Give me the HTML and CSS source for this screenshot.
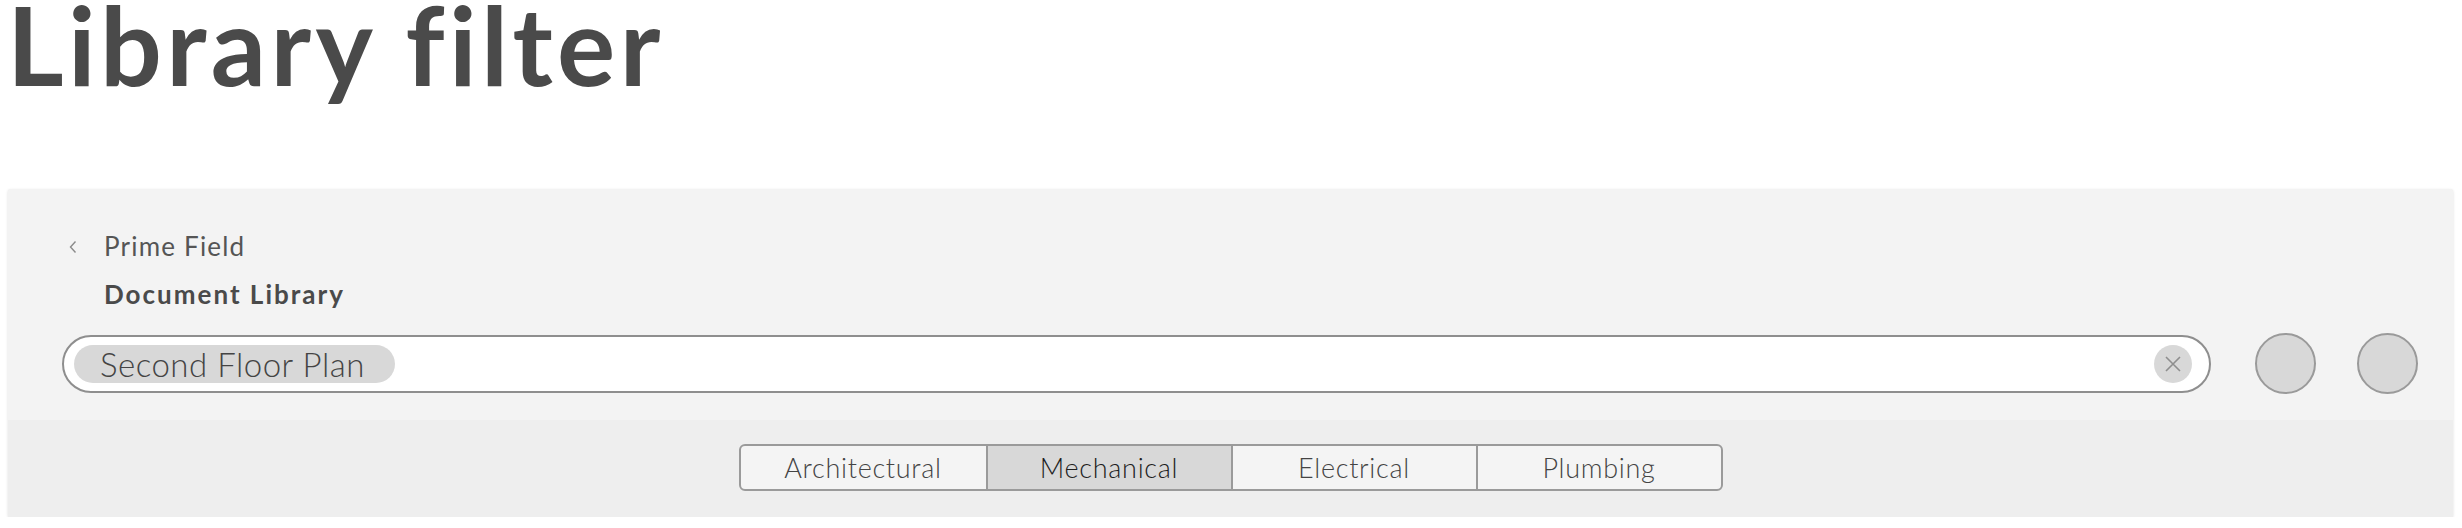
FILE: index.html
```html
<!DOCTYPE html>
<html>
<head>
<meta charset="utf-8">
<link rel="stylesheet" href="styles.css">
</head>
<body>
<h1 class="title">Library filter</h1>
<div class="panel">
  <div class="top">
    <div class="crumb">
      <span class="chev"><svg width="10" height="14" viewBox="0 0 10 14"><path d="M7.5 1.5 L2.5 7 L7.5 12.5" fill="none" stroke="#8a8a8a" stroke-width="1.4"/></svg></span>
      <span class="crumb-text">Prime Field</span>
    </div>
    <div class="heading">Document Library</div>
    <div class="search-row">
      <div class="search">
        <span class="chip">Second Floor Plan</span>
        <span class="spacer"></span>
        <span class="clear"><svg width="20" height="20" viewBox="0 0 20 20"><path d="M3 3 L17 17 M17 3 L3 17" stroke="#8e8e8e" stroke-width="1.6" fill="none"/></svg></span>
      </div>
      <span class="circle"></span>
      <span class="circle"></span>
    </div>
  </div>
  <div class="bar">
    <div class="seg">
      <span class="seg-item">Architectural</span>
      <span class="seg-item active">Mechanical</span>
      <span class="seg-item">Electrical</span>
      <span class="seg-item">Plumbing</span>
    </div>
  </div>
</div>
</body>
</html>
```

FILE: styles.css
```css
* { box-sizing: border-box; }
html, body { margin: 0; padding: 0; background: #fff; }
body { font-family: Lato, "Noto Sans", sans-serif; color: #4a4a4a; }

.title {
  margin: 0;
  padding-left: 7px;
  font-size: 109px;
  line-height: 87px;
  font-weight: 700;
  letter-spacing: 4.4px;
  color: #4a4a4a;
  white-space: nowrap;
}

.panel {
  margin: 102px 9px 0 8px;
  background: #f3f3f3;
  box-shadow: 0 1px 3px rgba(0,0,0,0.14);
  border-radius: 2px;
}

.top {
  padding: 42px 35px 26px 54px;
}

.crumb {
  display: flex;
  align-items: center;
  height: 29px;
  font-size: 26px;
  color: #555;
}
.chev { width: 42px; display: flex; align-items: center; padding-left: 6px; padding-top: 2px; }
.crumb-text { font-weight: 400; letter-spacing: 1.2px; }

.heading {
  margin-top: 20px;
  padding-left: 42px;
  font-size: 26px;
  line-height: 29px;
  font-weight: 700;
  letter-spacing: 2px;
  color: #4a4a4a;
}

.search-row {
  margin-top: 24px;
  display: flex;
  align-items: center;
}

.search {
  flex: 1;
  height: 58px;
  border: 2px solid #8e8e8e;
  border-radius: 29px;
  background: #fff;
  display: flex;
  align-items: center;
  padding: 0 17px 0 10px;
}
.chip {
  height: 38px;
  border-radius: 19px;
  background: #d8d8d8;
  padding: 0 30px 0 26px;
  font-size: 33px;
  line-height: 38px;
  color: #444;
  font-weight: 300;
  letter-spacing: 0.5px;
}
.spacer { flex: 1; }
.clear {
  width: 38px;
  height: 38px;
  border-radius: 50%;
  background: #d8d8d8;
  display: flex;
  align-items: center;
  justify-content: center;
}

.circle {
  width: 61px;
  height: 61px;
  border-radius: 50%;
  background: #d8d8d8;
  border: 2px solid #9a9a9a;
  flex: none;
  margin-left: 44px;
}
.circle + .circle { margin-left: 41px; }

.bar {
  background: #eeeeee;
  height: 97px;
  display: flex;
  align-items: center;
  justify-content: center;
  padding-bottom: 3px;
}

.seg {
  display: flex;
  border: 2px solid #9a9a9a;
  border-radius: 6px;
  overflow: hidden;
  background: #f4f4f4;
}
.seg-item {
  width: 245px;
  height: 43px;
  display: flex;
  align-items: center;
  justify-content: center;
  font-size: 27px;
  color: #444;
  font-weight: 300;
  letter-spacing: 0.7px;
}
.seg-item + .seg-item { border-left: 2px solid #9a9a9a; }
.seg-item.active { background: #d8d8d8; color: #1e1e1e; }
```
